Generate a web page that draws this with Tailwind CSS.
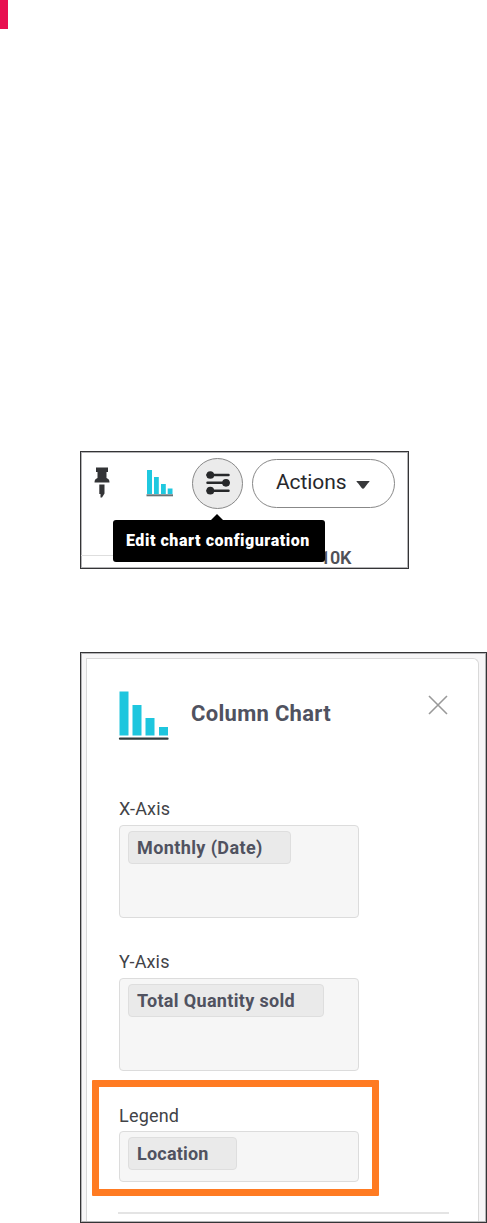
<!DOCTYPE html>
<html lang="en">
<head>
  <meta charset="UTF-8">
  <meta name="viewport" content="width=device-width, initial-scale=1.0">
  <title>Chart configuration</title>
  <script src="https://cdn.jsdelivr.net/npm/@tailwindcss/browser@4"></script>
</head>
<body class="bg-white font-['Roboto',sans-serif] overflow-hidden">

  <div class="w-2 h-[29px] bg-[#e80f50]"></div>

  <div class="ml-20 pt-[422px]">

    <!-- Toolbar -->
    <div class="relative w-[329px] h-[118px] border border-[#343436] inset-shadow-[0_0_0_1px_#b4b4b6] overflow-hidden">
      <div class="flex items-center h-[62px] pl-[12px]">
        <svg class="w-[18px] h-[32px]" viewBox="0 0 18 32" fill="#333436">
          <path d="M3 .5h12v4.500h-1.500v6c2 .8 3 2 3 4.500h-15c0-2.500 1-3.700 3-4.500v-6h-1.500z"/>
          <path d="M6.300 17.500h5.200v9l-2.500 4h-1.500v-3.500h-1.200z"/>
        </svg>
        <svg class="ml-[35px] w-[28px] h-[28px]" viewBox="0 0 28 28">
          <path fill="#1fc8df" d="M1 1h5v24h-5zM8 8h4.800v17h-4.800zM15 15h4.800v10h-4.800zM21.700 19.500h4.800v5.500h-4.800z"/>
          <path fill="#667477" d="M.5 25.300h26.500v2h-26.500z"/>
        </svg>
        <div class="ml-[18px] size-[51px] rounded-full border border-[#888] bg-[#ebebeb] flex items-center justify-center">
          <svg class="w-[26px] h-[24px]" viewBox="0 0 26 24" stroke="#27282a" stroke-width="2.500" stroke-linecap="round" fill="#27282a">
            <path d="M2.500 4h21M2.500 11.800h21M2.500 19.700h21"/>
            <circle cx="5.300" cy="4" r="2.600"/>
            <circle cx="21" cy="11.800" r="2.600"/>
            <circle cx="5.300" cy="19.700" r="2.600"/>
          </svg>
        </div>
        <button class="ml-[9px] w-[143px] h-[49px] rounded-full border border-[#888] flex items-center pl-[23px] text-[21px] tracking-[-0.1px] text-[#27282c]">
          <span class="w-[80px] text-left">Actions</span>
          <svg class="mt-[3px] w-[14px] h-[10px]" viewBox="0 0 14 10"><path fill="#38393b" d="M.500 1h13c0 1-1 1.600-1.600 2.300l-3.400 4.500q-1.500 2-3 0l-3.400-4.500c-.600-.700-1.600-1.300-1.600-2.300z"/></svg>
        </button>
      </div>
      <div class="mt-[41px] h-px bg-[#dedede] w-[32px]"></div>
      <div class="absolute left-[239px] top-[95px] text-[18px] leading-[22px] font-semibold tracking-[-0.3px] text-[#505157]">10K</div>
      <div class="absolute left-[32px] top-[68px] w-[212px] h-[42px] rounded-[3px] bg-black text-white flex items-center pl-[13px] text-[16px] font-black whitespace-nowrap tracking-[0.56px]">Edit chart configuration</div>
      <svg class="absolute left-[129px] top-[62px] w-[14px] h-[7px]" viewBox="0 0 14 7"><path d="M0 7l7-7 7 7z"/></svg>
    </div>

    <!-- Chart configuration panel -->
    <div class="relative mt-[83px] w-[407px] h-[571px] border border-[#343436] inset-shadow-[0_0_0_1px_#b4b4b6] bg-[#f7f6f7] pt-[5px] pl-[5px] pr-[7px] overflow-hidden">
      <div class="h-[563px] border border-b-0 border-[#d9d9d9] rounded-tr-[6px] bg-white pl-[32px]">
        <div class="flex h-[140px]">
          <svg class="mt-[31px] -ml-px w-[51px] h-[52px]" viewBox="0 0 51 52">
            <path fill="#1ec6de" d="M1.500 1.500h9v44h-9zM14.500 15h9v30.500h-9zM27.500 28h9v17.500h-9zM41 37h9v8.500h-9z"/>
            <path stroke="#303b3d" stroke-width="2.300" stroke-linecap="round" d="M2 48.700h47.500"/>
          </svg>
          <h2 class="ml-[22px] mt-[41px] w-[237px] text-[22px] leading-[28px] font-bold tracking-[0.3px] text-[#505260]">Column Chart</h2>
          <svg class="mt-[36px] w-[20px] h-[20px]" viewBox="0 0 20 20"><path stroke="#999" stroke-width="1.600" d="M1 1l18 18M19 1l-18 18"/></svg>
        </div>

        <div class="h-[153px]">
          <div class="h-[26px] text-[18px] leading-[20px] tracking-[0.15px] text-[#424347]">X-Axis</div>
          <div class="w-[240px] h-[93px] rounded-[4px] border border-[#dcdcdc] bg-[#f6f6f6] p-[5px] pl-[8px]">
            <div class="w-[163px] h-[33px] rounded-[4px] border border-[#dedede] bg-[#eaeaea] pl-[8px] text-[18px] leading-[31px] font-bold tracking-[0.4px] text-[#505260]">Monthly (Date)</div>
          </div>
        </div>

        <div class="h-[153px]">
          <div class="h-[26px] text-[18px] leading-[20px] tracking-[0.15px] text-[#424347]">Y-Axis</div>
          <div class="w-[240px] h-[93px] rounded-[4px] border border-[#dcdcdc] bg-[#f6f6f6] p-[5px] pl-[8px]">
            <div class="w-[196px] h-[33px] rounded-[4px] border border-[#dedede] bg-[#eaeaea] pl-[8px] text-[18px] leading-[31px] font-bold tracking-[0.33px] text-[#505260]">Total Quantity sold</div>
          </div>
        </div>

        <div class="h-[107px]">
          <div class="h-[26px] text-[18px] leading-[21px] tracking-[0.2px] text-[#424347]">Legend</div>
          <div class="w-[240px] h-[51px] rounded-[4px] border border-[#dcdcdc] bg-[#f6f6f6] p-[5px] pl-[8px]">
            <div class="w-[109px] h-[33px] rounded-[4px] border border-[#dedede] bg-[#eaeaea] pl-[8px] text-[18px] leading-[31px] font-bold tracking-[0.2px] text-[#505260]">Location</div>
          </div>
        </div>

        <div class="-ml-px w-[331px] h-[2px] bg-[#e4e4e4]"></div>
      </div>

      <!-- Highlight around the legend field -->
      <div class="absolute left-[11px] top-[427px] w-[287px] h-[116px] border-[7px] border-[#ff7b22] rounded-[1px]"></div>
    </div>

  </div>

</body>
</html>
